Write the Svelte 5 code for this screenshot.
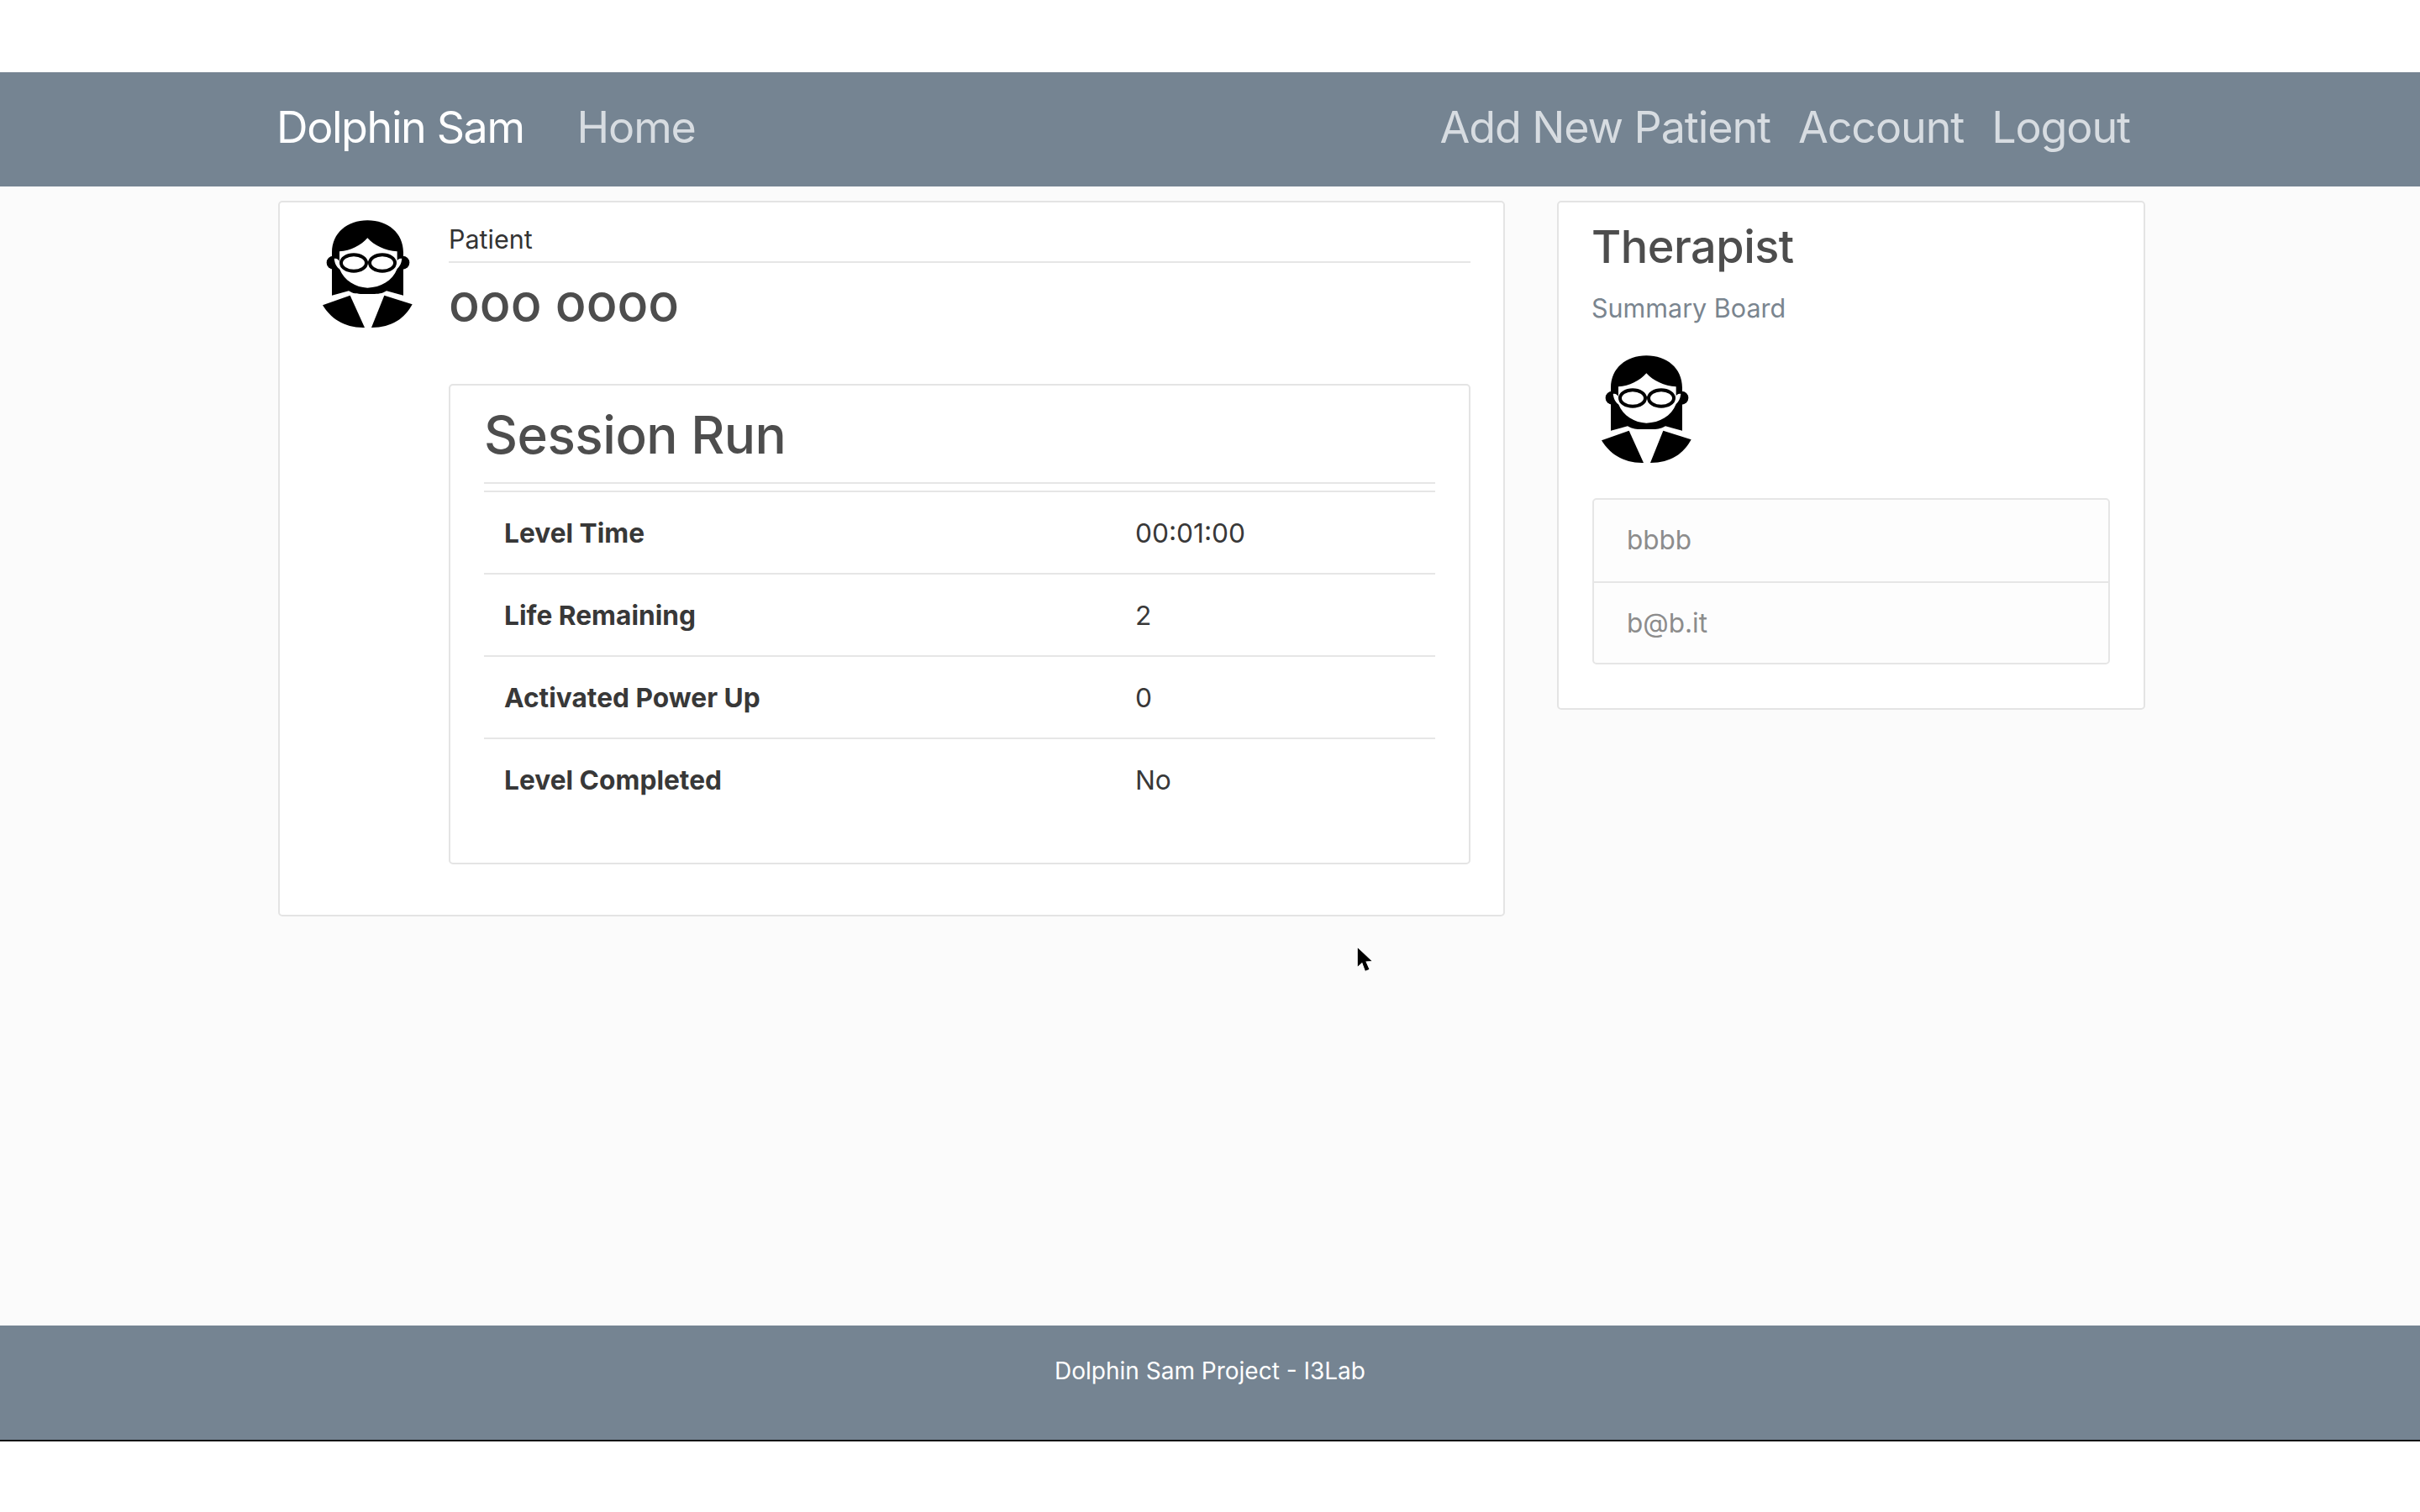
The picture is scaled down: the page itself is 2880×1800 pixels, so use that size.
<script>
	const rows = [
		['Level Time', '00:01:00'],
		['Life Remaining', '2'],
		['Activated Power Up', '0'],
		['Level Completed', 'No']
	];
</script>

{#snippet avatar()}
	<svg class="avatar" viewBox="60 25 345 405" xmlns="http://www.w3.org/2000/svg">
		<circle cx="110" cy="186" r="24" fill="#000" />
		<circle cx="358" cy="186" r="24" fill="#000" />
		<path d="M105 303 L105 150 C105 80 160 35 232 35 C305 35 360 80 360 150 L360 303 L300 287 C280 300 260 298 232 298 C205 298 185 300 165 287 Z" fill="#000" />
		<path d="M113 172 C122 170 130 176 135 186 L135 210 C125 206 116 194 113 172 Z" fill="#fff" />
		<path d="M355 172 C346 170 338 176 333 186 L333 210 C343 206 352 194 355 172 Z" fill="#fff" />
		<path d="M132 146 C172 144 208 125 232 98 C256 125 296 144 338 146 L338 208 C320 252 280 274 232 276 C190 274 150 252 132 208 Z" fill="#fff" />
		<ellipse cx="183" cy="187" rx="45" ry="29" fill="#fff" stroke="#000" stroke-width="12" />
		<ellipse cx="285" cy="187" rx="45" ry="29" fill="#fff" stroke="#000" stroke-width="12" />
		<path d="M72 338 L170 303 L222 418 C150 420 100 385 72 338 Z" fill="#000" />
		<path d="M392 335 L292 303 L246 418 C320 418 365 385 392 335 Z" fill="#000" />
	</svg>
{/snippet}

<div class="page">
	<nav class="navbar">
		<span class="brand">Dolphin Sam</span>
		<span class="link">Home</span>
		<div class="nav-right">
			<span class="link">Add New Patient</span>
			<span class="link">Account</span>
			<span class="link">Logout</span>
		</div>
	</nav>

	<main class="content">
		<section class="card patient">
			<div class="patient-avatar">
				{@render avatar()}
			</div>
			<div class="patient-body">
				<div class="patient-label">Patient</div>
				<h4 class="patient-name">ooo oooo</h4>
				<div class="card session">
					<h2 class="session-title">Session Run</h2>
					<table>
						<tbody>
							{#each rows as row}
								<tr>
									<th>{row[0]}</th>
									<td>{row[1]}</td>
								</tr>
							{/each}
						</tbody>
					</table>
				</div>
			</div>
		</section>

		<aside class="card therapist">
			<h3 class="therapist-title">Therapist</h3>
			<div class="therapist-sub">Summary Board</div>
			<div class="therapist-avatar">
				{@render avatar()}
			</div>
			<ul class="list">
				<li>bbbb</li>
				<li>b@b.it</li>
			</ul>
		</aside>
	</main>

	<footer class="footer">Dolphin Sam Project - I3Lab</footer>

	<svg class="cursor" viewBox="0 0 20 32" xmlns="http://www.w3.org/2000/svg">
		<path d="M1 1 L1 25 L6.5 20 L10 29.5 L15.5 27.5 L11.5 18.5 L19 18 Z" fill="#000" stroke="#fff" stroke-width="1" />
	</svg>
</div>

<style>
	:global(body) {
		margin: 0;
		background: #fff;
		font-family: Inter, "Liberation Sans", sans-serif;
	}

	.page {
		position: relative;
		width: 2880px;
		height: 1800px;
		padding-top: 86px;
		box-sizing: border-box;
		background: #fff;
	}

	.navbar {
		display: flex;
		align-items: center;
		height: 136px;
		padding: 0 345px 5px 329px;
		box-sizing: border-box;
		background: #758492;
		font-size: 52px;
		letter-spacing: -1.1px;
	}

	.brand {
		color: #fff;
		margin-right: 63px;
		letter-spacing: -1.4px;
	}

	.link {
		color: #d7dce1;
	}

	.nav-right {
		display: flex;
		gap: 33px;
		margin-left: auto;
	}

	.content {
		display: flex;
		align-items: flex-start;
		gap: 62px;
		height: 1356px;
		padding: 17px 0 0 331px;
		box-sizing: border-box;
		background: #fbfbfb;
	}

	.card {
		background: #fff;
		border: 2px solid #e4e4e4;
		border-radius: 5px;
		box-sizing: border-box;
	}

	.avatar {
		display: block;
		width: 115px;
		height: 135px;
	}

	.patient {
		display: flex;
		width: 1460px;
		height: 852px;
	}

	.patient-avatar {
		margin: 18px 0 0 47px;
	}

	.patient-body {
		width: 1216px;
		margin-left: 39px;
	}

	.patient-label {
		height: 72px;
		padding-top: 24px;
		box-sizing: border-box;
		border-bottom: 2px solid #e6e6e6;
		font-size: 30.5px;
		line-height: 40px;
		color: #333;
	}

	.patient-name {
		margin: 7px 0 0;
		font-size: 61px;
		font-weight: 500;
		line-height: 80px;
		color: #4d4d4d;
	}

	.session {
		height: 572px;
		margin-top: 57px;
		padding: 0 40px 0 40px;
	}

	.session-title {
		height: 115px;
		margin: 0;
		border-bottom: 2px solid #e6e6e6;
		font-size: 62px;
		font-weight: 500;
		letter-spacing: -0.5px;
		line-height: 118px;
		color: #4d4d4d;
	}

	table {
		width: 100%;
		margin-top: 8px;
		border-collapse: collapse;
		font-size: 31.7px;
		color: #383838;
	}

	tr {
		height: 98px;
		border-top: 2px solid #e6e6e6;
	}

	th {
		width: 775px;
		padding: 0 0 0 24px;
		box-sizing: border-box;
		text-align: left;
		font-weight: 650;
	}

	td {
		padding: 0;
	}

	.therapist {
		width: 700px;
		height: 606px;
		padding: 0 40px;
	}

	.therapist-title {
		margin: 20px 0 0 -1px;
		font-size: 54px;
		font-weight: 500;
		letter-spacing: -0.5px;
		line-height: 66px;
		color: #4d4d4d;
	}

	.therapist-sub {
		margin: 20px 0 0 -1px;
		font-size: 30.5px;
		line-height: 40px;
		color: #7a858f;
	}

	.therapist-avatar {
		margin: 33px 0 0 7px;
	}

	.list {
		margin: 38px 0 0;
		padding: 0;
		list-style: none;
		border: 2px solid #e6e6e6;
		border-radius: 5px;
		font-size: 31.5px;
		color: #8c8c8c;
		background: #fdfdfd;
	}

	.list li {
		height: 97px;
		padding-left: 39px;
		line-height: 96px;
		box-sizing: border-box;
	}

	.list li + li {
		border-top: 2px solid #e6e6e6;
	}

	.footer {
		height: 138px;
		padding-top: 34px;
		box-sizing: border-box;
		border-bottom: 2px solid #111;
		background: #758492;
		color: #fff;
		font-size: 28px;
		line-height: 40px;
		text-align: center;
	}

	.cursor {
		position: absolute;
		left: 1614px;
		top: 1126px;
		width: 21px;
		height: 33px;
	}
</style>
